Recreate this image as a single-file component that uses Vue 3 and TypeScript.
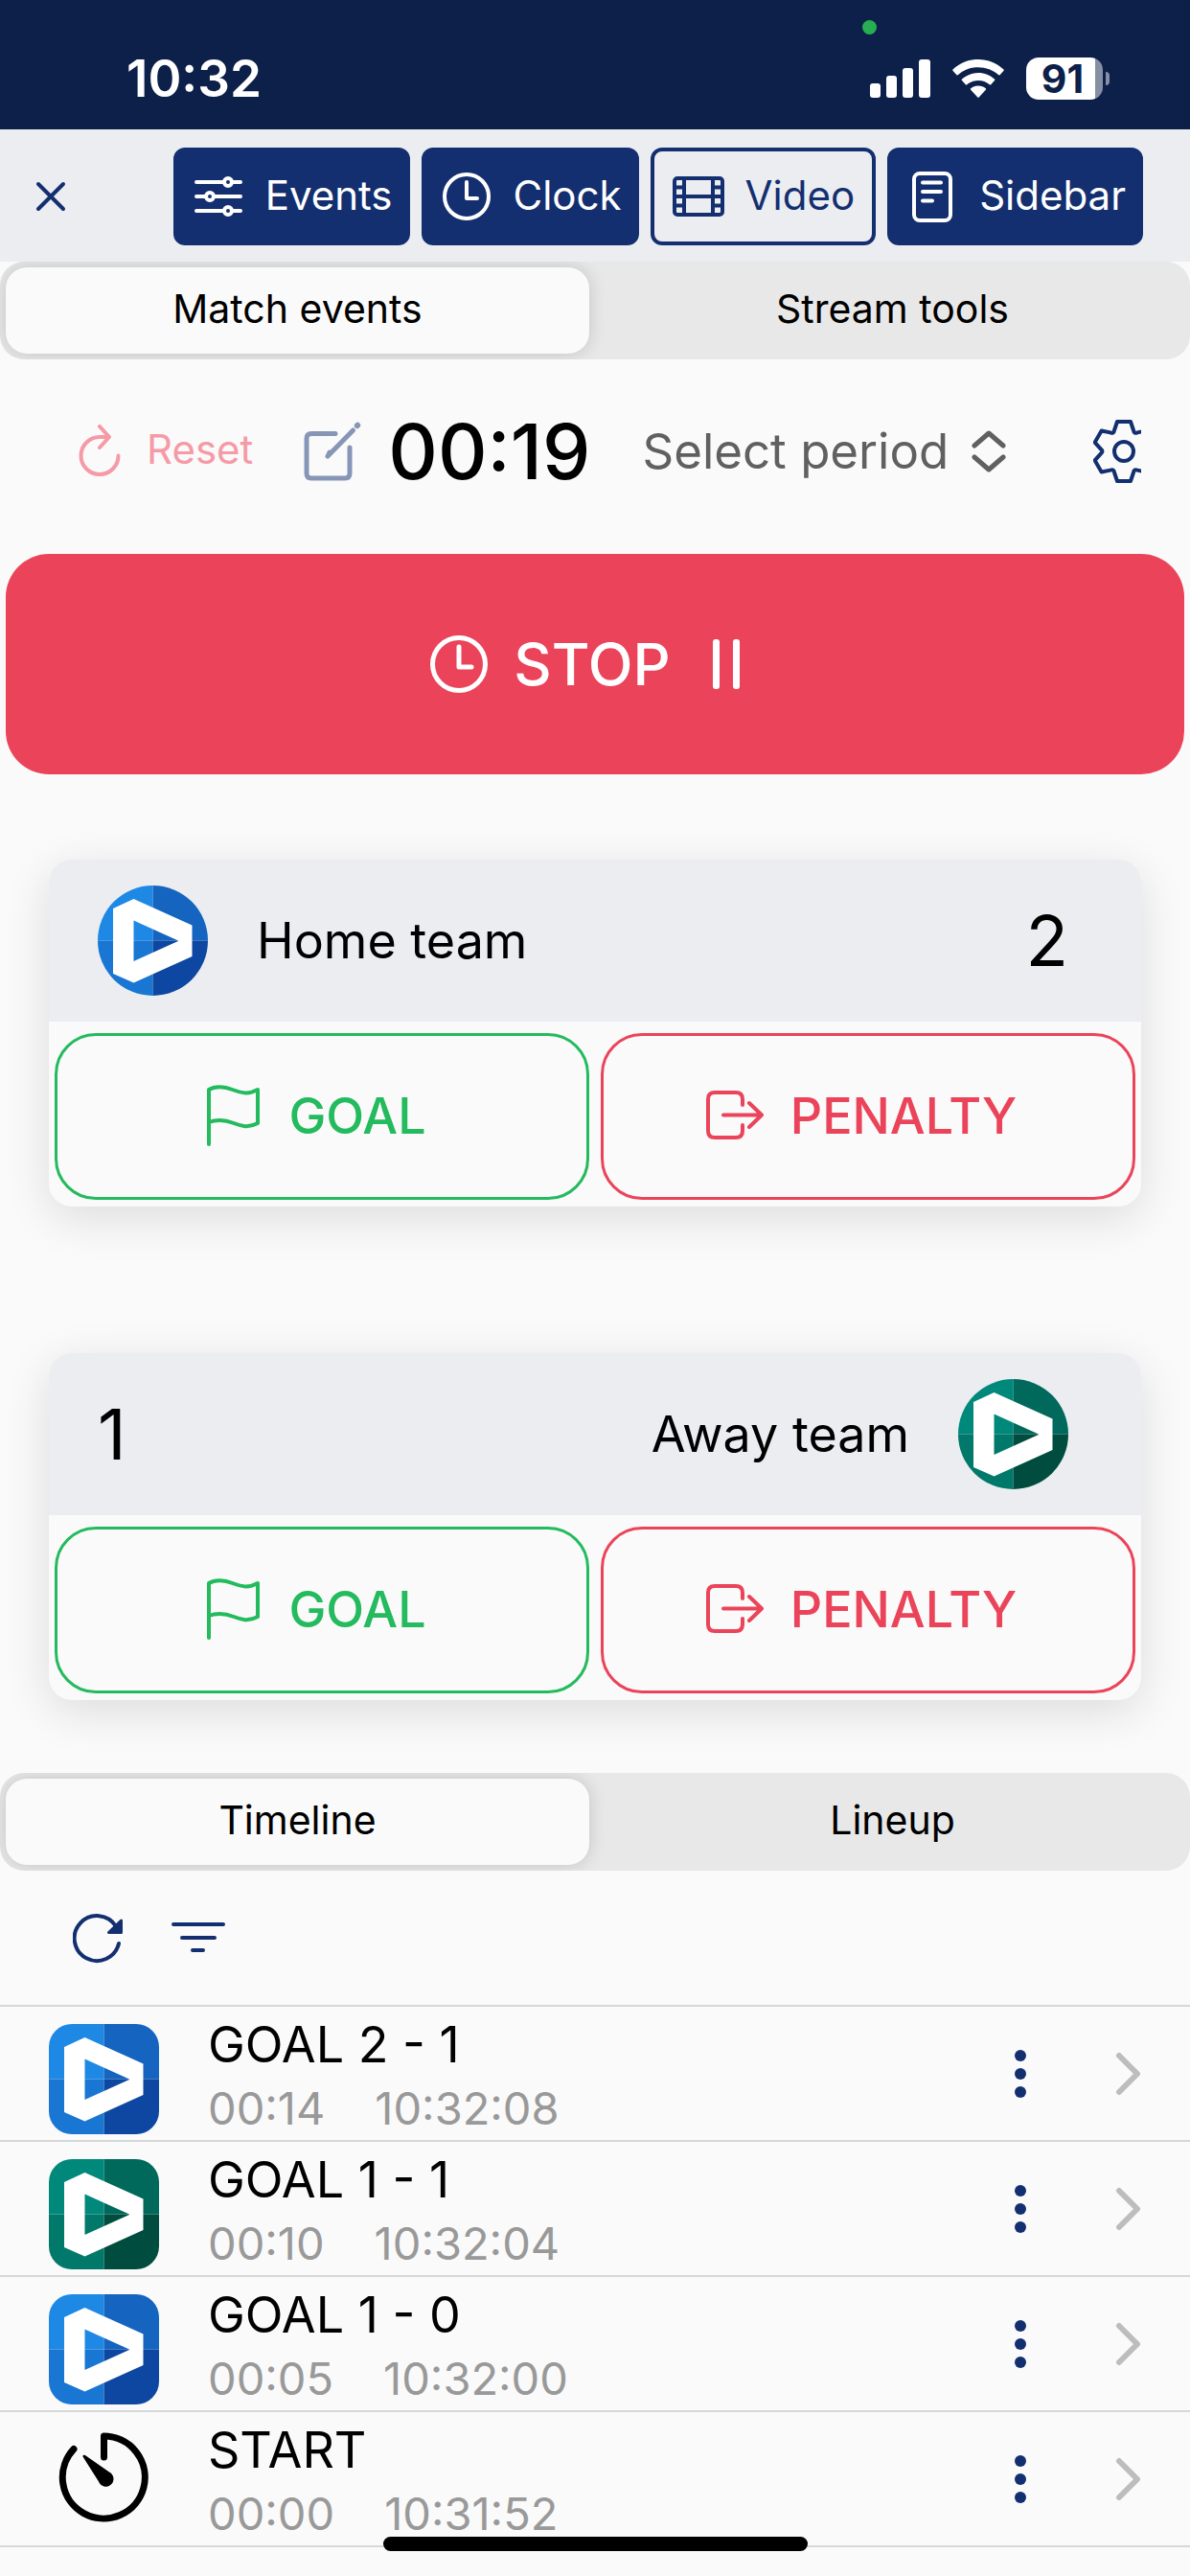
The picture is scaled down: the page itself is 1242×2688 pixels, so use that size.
<script setup lang="ts">
import { ref } from 'vue'

interface Team {
  id: string
  name: string
  score: number
  palette: string
  mirrored: boolean
}

interface TimelineEvent {
  title: string
  matchTime: string
  clockTime: string
  palette: string | null
}

const palettes: Record<string, string[]> = {
  blue: ['#1e88e5', '#1565c0', '#1976d2', '#0d47a1'],
  green: ['#00897b', '#00695c', '#00796b', '#004d40'],
}

const teams: Team[] = [
  { id: 'home', name: 'Home team', score: 2, palette: 'blue', mirrored: false },
  { id: 'away', name: 'Away team', score: 1, palette: 'green', mirrored: true },
]

const events: TimelineEvent[] = [
  { title: 'GOAL 2 - 1', matchTime: '00:14', clockTime: '10:32:08', palette: 'blue' },
  { title: 'GOAL 1 - 1', matchTime: '00:10', clockTime: '10:32:04', palette: 'green' },
  { title: 'GOAL 1 - 0', matchTime: '00:05', clockTime: '10:32:00', palette: 'blue' },
  { title: 'START', matchTime: '00:00', clockTime: '10:31:52', palette: null },
]

const mainTab = ref('Match events')
const listTab = ref('Timeline')
const period = ref('')

const logoShape =
  'M16 24 37.500 14 98.500 41.500V74L37.500 101.500 16 92ZM37.500 36.500V79L84.500 57.700Z'

// Six-toothed outline, one tooth rotated around the origin.
function gearOutline(): string {
  const turn = (x: number, y: number, k: number): string => {
    const a = (k * Math.PI) / 3
    const rx = x * Math.cos(a) - y * Math.sin(a)
    const ry = x * Math.sin(a) + y * Math.cos(a)
    return `${rx.toFixed(2)} ${ry.toFixed(2)}`
  }
  let d = `M${turn(-10, -22, 0)}`
  for (let k = 0; k < 6; k++) {
    d += `L${turn(-7, -31, k)}L${turn(7, -31, k)}L${turn(10, -22, k)}`
    d += `Q${turn(10.5, -18.2, k)} ${turn(-10, -22, k + 1)}`
  }
  return d + 'Z'
}
const gearPath = gearOutline()
</script>

<template>
  <div class="app">
    <header class="status">
      <span class="status-time">10:32</span>
      <span class="camera-dot"></span>
      <div class="status-icons">
        <svg width="63" height="40" viewBox="0 0 63 40" fill="#fff" aria-hidden="true">
          <rect x="0" y="25" width="11" height="15" rx="3" />
          <rect x="17" y="17" width="11" height="23" rx="3" />
          <rect x="34" y="9" width="11" height="31" rx="3" />
          <rect x="51" y="0" width="12" height="40" rx="3" />
        </svg>
        <svg width="54" height="40" viewBox="0 0 54 40" fill="#fff" aria-hidden="true">
          <path d="M27 0C37 0 46.500 4 53.500 10.500Q54 11.200 53.400 12L49.500 16.200Q48.800 16.800 48 16.100C42.500 11 35 8.200 27 8.200S11.500 11 6 16.100Q5.200 16.800 4.500 16.200L.6 12Q0 11.200.5 10.500C7.500 4 17 0 27 0Z" />
          <path d="M27 14C33.500 14 39.500 16.500 44 20.600Q44.700 21.300 44 22L40.200 26.200Q39.500 26.800 38.800 26.200C35.500 23.500 31.500 22 27 22S18.500 23.500 15.200 26.200Q14.500 26.800 13.800 26.200L10 22Q9.300 21.300 10 20.600C14.500 16.500 20.500 14 27 14Z" />
          <path d="M27 27.500C30 27.500 32.700 28.500 34.800 30.300Q35.500 31 34.800 31.700L27.700 39.400Q27 40 26.300 39.400L19.200 31.700Q18.500 31 19.200 30.300C21.300 28.500 24 27.500 27 27.500Z" />
        </svg>
        <span class="battery"><span class="battery-level">91</span></span>
      </div>
    </header>

    <nav class="toolbar">
      <button class="close" type="button" aria-label="Close">
        <svg width="32" height="32" viewBox="0 0 32 32" fill="none" stroke="currentColor" stroke-width="4" stroke-linecap="round">
          <path d="M3 3 29 29M29 3 3 29" />
        </svg>
      </button>
      <div class="toolbar-actions">
        <button class="tool" type="button">
          <svg class="tool-icon" viewBox="0 0 54 54" fill="none" stroke="currentColor" stroke-width="4" stroke-linecap="round">
            <path d="M4 12H33M42 12H50M4 27H13M22 27H50M4 42H33M42 42H50" />
            <circle cx="37" cy="12" r="4" /><circle cx="18" cy="27" r="4" /><circle cx="37" cy="42" r="4" />
          </svg>
          <span class="tool-label">Events</span>
        </button>
        <button class="tool" type="button">
          <svg class="tool-icon" viewBox="0 0 54 54" fill="none" stroke="currentColor" stroke-width="4" stroke-linecap="round" stroke-linejoin="round">
            <circle cx="27" cy="27" r="23" /><path d="M27 12V29H38" />
          </svg>
          <span class="tool-label">Clock</span>
        </button>
        <button class="tool outline" type="button">
          <svg class="tool-icon" viewBox="0 0 54 54" fill="none" stroke="currentColor" stroke-width="4" stroke-linejoin="round">
            <rect x="2" y="8" width="50" height="38" rx="3" />
            <path d="M12 8V46M42 8V46M12 27H42M2 17.500H12M2 27H12M2 36.500H12M42 17.500H52M42 27H52M42 36.500H52" />
          </svg>
          <span class="tool-label">Video</span>
        </button>
        <button class="tool" type="button">
          <svg class="tool-icon" viewBox="0 0 54 54" fill="none" stroke="currentColor" stroke-width="4" stroke-linecap="round">
            <rect x="8" y="3" width="38" height="49" rx="6" />
            <path d="M17 12.500H36M17 22H36M17 31.500H27" />
          </svg>
          <span class="tool-label">Sidebar</span>
        </button>
      </div>
    </nav>

    <div class="segment" role="tablist">
      <button
        v-for="tab in ['Match events', 'Stream tools']"
        :key="tab"
        type="button"
        role="tab"
        class="segment-item"
        :class="{ active: mainTab === tab }"
        :aria-selected="mainTab === tab"
        @click="mainTab = tab"
      >{{ tab }}</button>
    </div>

    <div class="clock-row">
      <button class="reset" type="button">
        <svg width="46" height="56" viewBox="0 0 46 56" fill="none" stroke="currentColor" stroke-width="4" stroke-linecap="round" stroke-linejoin="round">
          <path d="M23 2 33 13 23 24" />
          <path d="M32 13H23A19.500 19.500 0 1 0 42.500 32.500" />
        </svg>
        <span class="tool-label">Reset</span>
      </button>
      <button class="edit" type="button" aria-label="Edit time">
        <svg width="60" height="62" viewBox="0 0 60 62" fill="none" stroke="currentColor" stroke-width="5" stroke-linecap="round" stroke-linejoin="round">
          <path d="M33 12.500H8Q3 12.500 3 17.500V54Q3 59 8 59H43Q48 59 48 54V27" />
          <path d="M25 36 51.500 9M25 36 27 32" />
          <path d="M55.800 4.200 56.200 3.800" stroke-width="6" />
        </svg>
      </button>
      <output class="timer">00:19</output>
      <label class="period">
        <select v-model="period" aria-label="Select period">
          <option value="">Select period</option>
          <option value="1">Period 1</option>
          <option value="2">Period 2</option>
        </select>
        <svg width="36" height="44" viewBox="0 0 36 44" fill="none" stroke="currentColor" stroke-width="5" stroke-linecap="round" stroke-linejoin="round" aria-hidden="true">
          <path d="M3 16 18 3 33 16M3 28 18 41 33 28" />
        </svg>
      </label>
      <button class="settings" type="button" aria-label="Settings">
        <svg width="50" height="68" viewBox="-32 -34 50 68" fill="none" stroke="currentColor" stroke-width="4" stroke-linejoin="round">
          <path :d="gearPath" /><circle r="10" />
        </svg>
      </button>
    </div>

    <button class="stop" type="button">
      <svg width="62" height="62" viewBox="0 0 62 62" fill="none" stroke="currentColor" stroke-width="5" stroke-linecap="round" stroke-linejoin="round">
        <circle cx="31" cy="31" r="27.500" /><path d="M31 13V34H44" />
      </svg>
      <span class="stop-label">STOP</span>
      <svg width="30" height="52" viewBox="0 0 30 52" fill="currentColor">
        <rect width="7" height="52" rx="3" /><rect x="21" width="7" height="52" rx="3" />
      </svg>
    </button>

    <main class="teams">
      <section v-for="team in teams" :key="team.id" class="card">
        <div class="card-head" :class="{ mirrored: team.mirrored }">
          <svg class="avatar" viewBox="0 0 115 115" aria-hidden="true">
            <rect width="57.500" height="57.500" :fill="palettes[team.palette][0]" />
            <rect x="57.500" width="57.500" height="57.500" :fill="palettes[team.palette][1]" />
            <rect y="57.500" width="57.500" height="57.500" :fill="palettes[team.palette][2]" />
            <rect x="57.500" y="57.500" width="57.500" height="57.500" :fill="palettes[team.palette][3]" />
            <path :d="logoShape" fill="#fff" fill-rule="evenodd" />
          </svg>
          <h2 class="team-name">{{ team.name }}</h2>
          <span class="score">{{ team.score }}</span>
        </div>
        <div class="card-actions">
          <button class="action goal" type="button">
            <svg width="60" height="66" viewBox="0 0 60 66" fill="none" stroke="currentColor" stroke-width="4" stroke-linecap="round" stroke-linejoin="round">
              <path d="M5 63V6C13 1 22 3 31 6.500S47 11 56 6V41C47 46 40 44.500 31 41S13 37 5 40" />
            </svg>
            GOAL
          </button>
          <button class="action penalty" type="button">
            <svg width="60" height="66" viewBox="0 0 60 66" fill="none" stroke="currentColor" stroke-width="4" stroke-linecap="round" stroke-linejoin="round">
              <path d="M38 22V16Q38 9 31 9H9Q2 9 2 16V49Q2 56 9 56H31Q38 56 38 49V43" />
              <path d="M18 32.500H58M45 20 58 32.500 45 45" />
            </svg>
            PENALTY
          </button>
        </div>
      </section>
    </main>

    <div class="segment" role="tablist">
      <button
        v-for="tab in ['Timeline', 'Lineup']"
        :key="tab"
        type="button"
        role="tab"
        class="segment-item"
        :class="{ active: listTab === tab }"
        :aria-selected="listTab === tab"
        @click="listTab = tab"
      >{{ tab }}</button>
    </div>

    <div class="list-tools">
      <button type="button" aria-label="Refresh">
        <svg width="54" height="54" viewBox="0 0 54 54" fill="none" stroke="currentColor" stroke-width="4" stroke-linecap="round" stroke-linejoin="round">
          <path d="M48 33A23.500 23.500 0 1 1 45 15" />
          <path d="M50.500 9V21.500H37.500Z" fill="currentColor" stroke-width="3" />
        </svg>
      </button>
      <button type="button" aria-label="Filter">
        <svg width="58" height="54" viewBox="0 0 58 54" fill="none" stroke="currentColor" stroke-width="4" stroke-linecap="round">
          <path d="M3 13H55M12 27H46M23 40H34" />
        </svg>
      </button>
    </div>

    <ul class="timeline">
      <li v-for="event in events" :key="event.clockTime" class="row">
        <svg v-if="event.palette" class="thumb" viewBox="0 0 115 115" aria-hidden="true">
          <rect width="57.500" height="57.500" :fill="palettes[event.palette][0]" />
          <rect x="57.500" width="57.500" height="57.500" :fill="palettes[event.palette][1]" />
          <rect y="57.500" width="57.500" height="57.500" :fill="palettes[event.palette][2]" />
          <rect x="57.500" y="57.500" width="57.500" height="57.500" :fill="palettes[event.palette][3]" />
          <path :d="logoShape" fill="#fff" fill-rule="evenodd" />
        </svg>
        <svg v-else class="thumb" viewBox="0 0 115 115" fill="none" stroke="#000" stroke-width="7" stroke-linecap="round" stroke-linejoin="round" aria-hidden="true">
          <path d="M57.500 29V7A43 43 0 1 1 26 20.500" />
          <path d="M35.500 28.500 52 54.500A8 8 0 1 0 63 44.500L37.500 26.800Q35 26.200 35.500 28.500Z" fill="#000" stroke="none" />
        </svg>
        <div class="row-text">
          <p class="row-title">{{ event.title }}</p>
          <p class="row-times"><span>{{ event.matchTime }}</span><span>{{ event.clockTime }}</span></p>
        </div>
        <button class="more" type="button" aria-label="More">
          <svg width="14" height="52" viewBox="0 0 14 52" fill="currentColor">
            <circle cx="7" cy="7" r="6" /><circle cx="7" cy="26" r="6" /><circle cx="7" cy="45" r="6" />
          </svg>
        </button>
        <svg width="27" height="46" viewBox="0 0 27 46" fill="none" stroke="#bdbdbd" stroke-width="6" stroke-linecap="round" stroke-linejoin="round" aria-hidden="true">
          <path d="M4 4 23 23 4 42" />
        </svg>
      </li>
    </ul>
    <div class="home-indicator"></div>
  </div>
</template>

<style>
body {
  margin: 0;
  background: #fafafa;
}
</style>

<style scoped>
.app {
  position: relative;
  min-height: 100vh;
  overflow: hidden;
  box-sizing: border-box;
  font-family: Inter, "Liberation Sans", sans-serif;
  color: #000;
  background: #fafafa;
}
svg {
  display: block;
  flex: none;
}
button {
  display: flex;
  align-items: center;
  justify-content: center;
  box-sizing: border-box;
  margin: 0;
  padding: 0;
  border: 0;
  background: none;
  color: #142f70;
  font: inherit;
  white-space: nowrap;
}

.status {
  position: relative;
  display: flex;
  align-items: center;
  justify-content: space-between;
  height: 135px;
  box-sizing: border-box;
  padding: 29px 84px 0 132px;
  background: #0d204a;
  color: #fff;
}
.status-time {
  font-size: 53px;
  font-weight: 600;
  line-height: 60px;
}
.camera-dot {
  position: absolute;
  top: 21px;
  left: 73%;
  width: 15px;
  height: 15px;
  margin-left: -7px;
  border-radius: 50%;
  background: #27ae53;
}
.status-icons {
  display: flex;
  align-items: center;
  gap: 23px;
}
.battery {
  position: relative;
  width: 80px;
  height: 44px;
  margin-right: 7px;
  border-radius: 13px;
  background: linear-gradient(90deg, #fff 90%, #8690a5 90%);
}
.battery::after {
  content: "";
  position: absolute;
  right: -7px;
  top: 15px;
  width: 4px;
  height: 14px;
  border-radius: 0 4px 4px 0;
  background: #8690a5;
}
.battery-level {
  display: block;
  padding-right: 4px;
  color: #0d204a;
  font-size: 41px;
  font-weight: 700;
  line-height: 44px;
  text-align: center;
}

.toolbar {
  display: flex;
  align-items: center;
  justify-content: space-between;
  padding: 19px 49px 17px 37px;
  background: #ebedf1;
}
.toolbar-actions {
  display: flex;
  gap: 12px;
}
.tool {
  gap: 22px;
  height: 102px;
  padding: 0 14px 0 16px;
  border: 4px solid #142f70;
  border-radius: 12px;
  background: #142f70;
  color: #fff;
  font-size: 42px;
}
.tool.outline {
  padding: 0 18px 0 19px;
  background: transparent;
  color: #142f70;
}
.tool-icon {
  width: 54px;
  height: 54px;
}
.tool-label {
  padding-bottom: 4px;
}

.segment {
  display: grid;
  grid-template-columns: 1fr 1fr;
  gap: 12px;
  padding: 6px;
  border-radius: 25px;
  background: #e8e8e8;
  overflow: hidden;
}
.segment-item {
  height: 90px;
  padding-bottom: 4px;
  border-radius: 22px;
  color: #000;
  font-size: 41px;
}
.segment-item.active {
  background: #fafafa;
  box-shadow: 0 0 18px rgba(0, 0, 0, 0.16);
}

.clock-row {
  display: flex;
  align-items: center;
  height: 191px;
  padding: 0 51px 0 81px;
}
.reset {
  gap: 26px;
  color: #f59aa6;
  font-size: 42px;
}
.edit {
  margin-left: 53px;
  color: #8796b7;
}
.timer {
  margin-left: 28px;
  font-size: 80px;
  font-weight: 500;
}
.period {
  display: flex;
  align-items: center;
  gap: 24px;
  margin-left: 54px;
  color: #606060;
}
.period select {
  appearance: none;
  margin: 0;
  padding: 0;
  border: 0;
  background: none;
  color: inherit;
  font-family: inherit;
  font-size: 51px;
  line-height: 64px;
}
.settings {
  margin-left: auto;
}

.stop {
  width: calc(100% - 12px);
  height: 230px;
  margin: 12px 6px 0;
  padding-right: 20px;
  border-radius: 45px;
  background: #eb445a;
  color: #fff;
  font-size: 61px;
  font-weight: 500;
}
.stop-label {
  margin: 0 44px 0 26px;
}

.teams {
  display: flex;
  flex-direction: column;
  gap: 153px;
  padding: 89px 51px 76px;
}
.card {
  border-radius: 24px;
  background: #fafafa;
  box-shadow: 0 12px 48px rgba(0, 0, 0, 0.12);
}
.card-head {
  display: flex;
  align-items: center;
  gap: 51px;
  height: 169px;
  padding: 0 76px 0 51px;
  border-radius: 24px 24px 0 0;
  background: #ebedf1;
}
.card-head.mirrored {
  flex-direction: row-reverse;
}
.avatar {
  width: 115px;
  height: 115px;
  border-radius: 50%;
}
.team-name {
  margin: 0;
  font-size: 52px;
  font-weight: 400;
}
.score {
  margin-left: auto;
  font-size: 73px;
}
.mirrored .score {
  margin: 0 auto 0 0;
}
.card-actions {
  display: grid;
  grid-template-columns: 1fr 1fr;
  gap: 12px;
  padding: 12px 6px 7px;
}
.action {
  gap: 28px;
  height: 174px;
  padding: 0 14px 2px 0;
  border: 3px solid currentColor;
  border-radius: 43px;
  font-size: 52px;
  font-weight: 500;
}
.goal {
  color: #24ba5e;
}
.penalty {
  color: #eb445a;
}

.list-tools {
  display: flex;
  align-items: center;
  gap: 48px;
  height: 140px;
  padding-left: 76px;
}

.timeline {
  margin: 0;
  padding: 0;
  border-top: 2px solid #d5d7d9;
  list-style: none;
}
.row {
  display: flex;
  align-items: center;
  height: 139px;
  padding: 0 51px;
  border-bottom: 2px solid #d5d7d9;
}
.thumb {
  width: 115px;
  height: 115px;
  margin-top: 12px;
  border-radius: 24px;
}
.row-text {
  flex: 1;
  padding-left: 51px;
}
.row-title,
.row-times {
  margin: 0;
}
.row-title {
  font-size: 52px;
  line-height: 72px;
}
.row-times {
  display: flex;
  gap: 52px;
  color: #999;
  font-size: 47px;
  line-height: 60px;
}
.more {
  margin-right: 92px;
}

.home-indicator {
  position: absolute;
  left: 50%;
  bottom: 26px;
  width: 443px;
  height: 15px;
  margin-left: -221px;
  border-radius: 8px;
  background: #000;
}
</style>
